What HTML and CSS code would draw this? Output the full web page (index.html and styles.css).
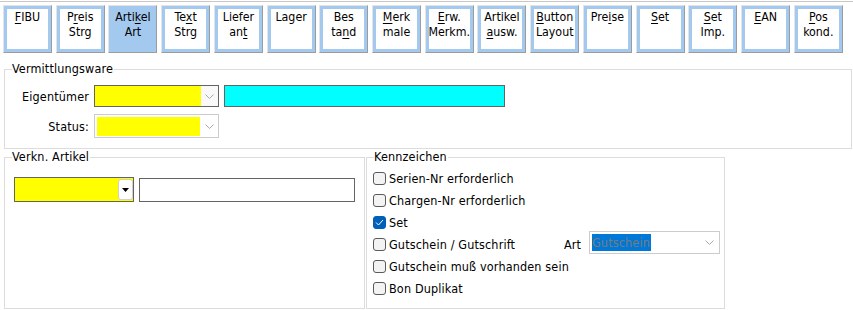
FILE: index.html
```html
<!DOCTYPE html>
<html lang="de">
<head>
<meta charset="utf-8">
<title>Artikel Art</title>
<link rel="stylesheet" href="styles.css">
</head>
<body>
<div class="topline"></div>
<div class="toolbar">
  <div class="btn"><u>F</u>IBU</div>
  <div class="btn">P<u>r</u>eis<br>Strg</div>
  <div class="btn active">Arti<u>k</u>el<br>Art</div>
  <div class="btn">Te<u>x</u>t<br>Strg</div>
  <div class="btn">Liefer<br>an<u>t</u></div>
  <div class="btn">Lager</div>
  <div class="btn">Bes<br>ta<u>n</u>d</div>
  <div class="btn"><u>M</u>erk<br>male</div>
  <div class="btn"><u>E</u>rw.<br>Merkm.</div>
  <div class="btn">Artikel<br><u>a</u>usw.</div>
  <div class="btn"><u>B</u>utton<br>Layout</div>
  <div class="btn">Pre<u>i</u>se</div>
  <div class="btn"><u>S</u>et</div>
  <div class="btn"><u>S</u>et<br>Imp.</div>
  <div class="btn"><u>E</u>AN</div>
  <div class="btn"><u>P</u>os<br>kond.</div>
</div>

<div class="group g1">
  <span class="legend">Vermittlungsware</span>
  <div class="frow r1">
    <span class="lbl">Eigentümer</span>
    <div class="combo combo-owner">
      <div class="fill"></div>
      <div class="dd"><svg width="9" height="5" viewBox="0 0 9 5"><polyline points="0.5,0.5 4.5,4.5 8.5,0.5" fill="none" stroke="#a8a8a8" stroke-width="1"/></svg></div>
    </div>
    <div class="cyanbox"></div>
  </div>
  <div class="frow r2">
    <span class="lbl">Status:</span>
    <div class="combo combo-status">
      <div class="fill"></div>
      <div class="dd"><svg width="9" height="5" viewBox="0 0 9 5"><polyline points="0.5,0.5 4.5,4.5 8.5,0.5" fill="none" stroke="#a8a8a8" stroke-width="1"/></svg></div>
    </div>
  </div>
</div>

<div class="row2">
  <div class="group g2">
    <span class="legend">Verkn. Artikel</span>
    <div class="frow">
      <div class="combo combo-link">
        <div class="fill"></div>
        <div class="ddbtn"><svg width="7" height="4" viewBox="0 0 7 4"><polygon points="0,0 7,0 3.5,4" fill="#000"/></svg></div>
      </div>
      <div class="textbox"></div>
    </div>
  </div>
  <div class="group g3">
    <span class="legend">Kennzeichen</span>
    <div class="checks">
      <div class="crow"><span class="cb"></span><span>Serien-Nr erforderlich</span></div>
      <div class="crow"><span class="cb"></span><span>Chargen-Nr erforderlich</span></div>
      <div class="crow"><span class="cb checked"><svg width="9" height="7" viewBox="0 0 9 7"><polyline points="1,3.5 3.5,6 8,1" fill="none" stroke="#fff" stroke-width="1"/></svg></span><span>Set</span></div>
      <div class="crow">
        <div class="citem"><span class="cb"></span><span>Gutschein / Gutschrift</span></div>
        <span class="artlbl">Art</span>
        <div class="combo combo-art">
          <span class="sel">Gutschein</span>
          <div class="dd"><svg width="9" height="5" viewBox="0 0 9 5"><polyline points="0.5,0.5 4.5,4.5 8.5,0.5" fill="none" stroke="#a8a8a8" stroke-width="1"/></svg></div>
        </div>
      </div>
      <div class="crow"><span class="cb"></span><span>Gutschein muß vorhanden sein</span></div>
      <div class="crow"><span class="cb"></span><span>Bon Duplikat</span></div>
    </div>
  </div>
</div>
</body>
</html>
```

FILE: styles.css
```css
html, body {
  margin: 0;
  padding: 0;
  background: #ffffff;
}
body {
  width: 853px;
  height: 310px;
  overflow: hidden;
  font-family: "DejaVu Sans Condensed", "DejaVu Sans", sans-serif;
  font-size: 12.5px;
  letter-spacing: 0.15px;
  color: #000;
}
.topline {
  margin-top: 1px;
  height: 1px;
  background: #c8c8c8;
}
.toolbar {
  display: flex;
  gap: 3.73px;
  margin-top: 3px;
  padding-left: 3px;
}
.btn {
  box-sizing: border-box;
  width: 49px;
  height: 48px;
  border: 1px solid;
  border-color: #e4e4e4 #9c9c9c #9c9c9c #e4e4e4;
  box-shadow: inset 0 0 0 3px #a3c9ee;
  background: #fff;
  padding-top: 4px;
  text-align: center;
  line-height: 15px;
  white-space: nowrap;
  letter-spacing: 0;
  font-size: 12.3px;
}
.btn.active {
  background: #a3c9ee;
}
.btn u {
  text-decoration-thickness: 1px;
  text-underline-offset: 2px;
}

.group {
  position: relative;
  box-sizing: border-box;
  border: 1px solid #dcdcdc;
}
.legend {
  position: absolute;
  left: 7px;
  top: -8px;
  line-height: 14px;
  background: #fff;
  padding-right: 1px;
  white-space: nowrap;
}
.g1 {
  margin: 16px 0 0 4px;
  width: 848px;
  height: 80px;
  padding-top: 15px;
}
.frow {
  display: flex;
  align-items: center;
}
.lbl {
  width: 84px;
  text-align: right;
  margin-right: 5px;
}
.r1 { height: 22px; }
.r2 { height: 24px; margin-top: 7px; }

.combo {
  box-sizing: border-box;
  display: flex;
  align-items: stretch;
}
.combo-owner {
  width: 125px;
  height: 22px;
  border: 1px solid #646464;
}
.combo-owner .fill {
  flex: 1;
  background: #ffff00;
}
.dd {
  width: 17px;
  display: flex;
  align-items: center;
  justify-content: center;
}
.combo-owner .dd {
  background: #f9f9f9;
}
.cyanbox {
  box-sizing: border-box;
  width: 281px;
  height: 22px;
  margin-left: 5px;
  border: 1px solid #646464;
  background: #00ffff;
}
.combo-status {
  width: 125px;
  height: 24px;
  border: 1px solid #cccccc;
  padding: 2px 0 1px 2px;
}
.combo-status .fill {
  flex: 1;
  background: #ffff00;
}
.combo-status .dd {
  width: 18px;
}

.row2 {
  display: flex;
  margin: 8px 0 0 4px;
}
.g2 {
  width: 361px;
  height: 152px;
  padding: 19px 0 0 9px;
}
.g3 {
  width: 359px;
  height: 152px;
  margin-left: 1px;
  padding: 9px 0 0 6px;
}
.combo-link {
  width: 120px;
  height: 25px;
  border: 1px solid #646464;
  background: #ffff00;
  padding: 1px 0 1px 0;
}
.combo-link .fill { flex: 1; }
.ddbtn {
  box-sizing: border-box;
  width: 15px;
  background: #fff;
  border: 1px solid #d0d0d0;
  border-radius: 3px;
  display: flex;
  align-items: center;
  justify-content: center;
}
.textbox {
  box-sizing: border-box;
  width: 216px;
  height: 24px;
  margin-left: 5px;
  border: 1px solid #646464;
  background: #fff;
}

.crow {
  display: flex;
  align-items: center;
  height: 22px;
  white-space: nowrap;
}
.citem {
  display: flex;
  align-items: center;
  width: 191px;
}
.cb {
  box-sizing: border-box;
  width: 13px;
  height: 13px;
  border: 1px solid #5a5a5a;
  border-radius: 3px;
  background: #f3f3f3;
  margin-right: 3px;
  flex: none;
  display: flex;
  align-items: center;
  justify-content: center;
}
.cb.checked {
  background: #005fb8;
  border-color: #005fb8;
}
.artlbl {
  width: 25px;
}
.combo-art {
  width: 131px;
  height: 23px;
  border: 1px solid #cccccc;
  background: #fff;
  margin-bottom: 3px;
  padding: 2px 0 2px 2px;
  align-items: stretch;
}
.combo-art .sel {
  background: #0078d7;
  color: #7a7a7a;
  line-height: 17px;
  padding-right: 1px;
}
.combo-art .dd {
  margin-left: auto;
  width: 20px;
}
```
